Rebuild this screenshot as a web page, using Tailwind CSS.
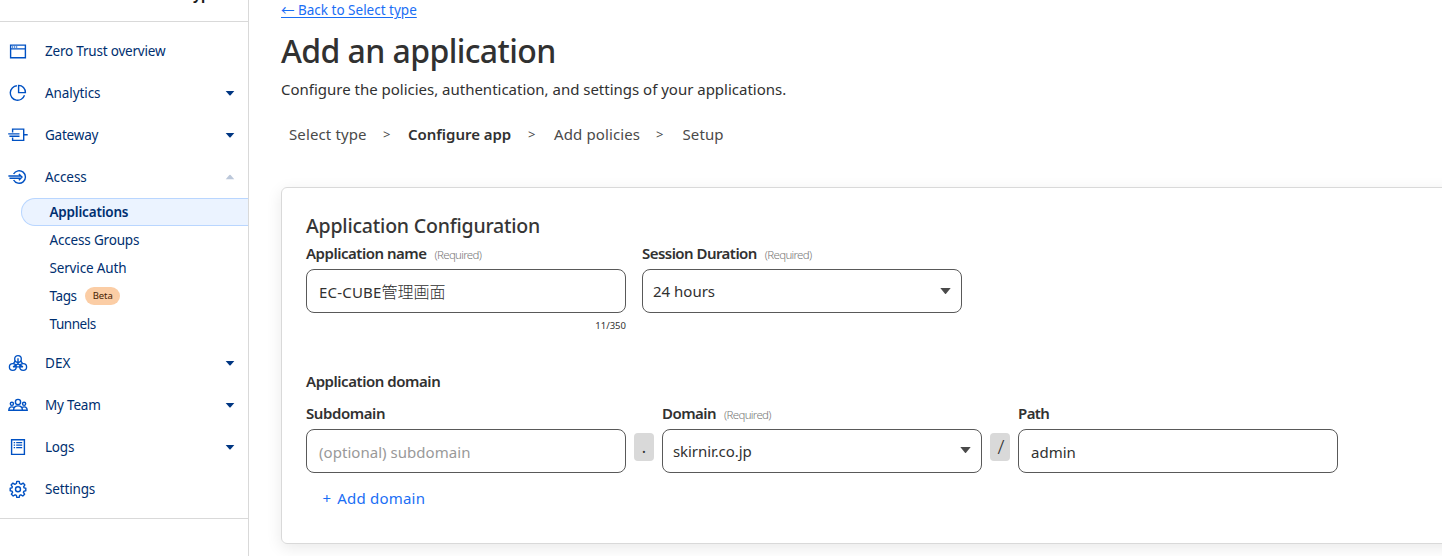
<!DOCTYPE html>
<html lang="en">
<head>
<meta charset="utf-8">
<title>Add an application</title>
<script src="https://cdn.jsdelivr.net/npm/@tailwindcss/browser@4"></script>
</head>
<body class="bg-white font-['Noto_Sans','Noto_Sans_CJK_JP',sans-serif] text-[#313131]">
<div class="flex h-[556px] w-[1442px] overflow-hidden">

  <aside class="flex w-[249px] shrink-0 flex-col border-r border-[#d9d9d9] text-[13.5px] tracking-[-0.08px] text-[#002f70]">
    <div class="h-[22px] overflow-hidden border-b border-[#d9d9d9] pl-[193px]">
      <div class="-mt-[15px] text-[14px] font-bold leading-5 text-[#1d1d1d]">yp</div>
    </div>
    <nav class="flex h-[497px] flex-col border-b border-[#d9d9d9] pt-2">
      <a class="flex h-[42px] items-center pl-2 pr-[13px]">
        <svg class="h-5 w-5" viewBox="0 0 20 20" fill="none" stroke="#0051c3" stroke-width="1.4"><path d="M2.6 4.1h14.8v12.6H2.6zM2.6 7.9h14.8"/><path d="M4.2 6h1M6.2 6h1M8.2 6h1"/></svg>
        <span class="ml-[17px] tracking-[-0.2px]">Zero Trust overview</span>
      </a>
      <a class="flex h-[42px] items-center pl-2 pr-[13px]">
        <svg class="h-5 w-5" viewBox="0 0 20 20" fill="none" stroke="#0051c3" stroke-width="1.4"><path d="M8.9 2.7a7.3 7.3 0 1 0 7.6 9.6"/><path d="M10.6 2.4v7.2h6.8c0-4-2.8-7.2-6.8-7.2z"/></svg>
        <span class="ml-[17px]">Analytics</span>
        <svg class="ml-auto h-3 w-[10px]" viewBox="0 0 10 12" fill="#003682"><path d="M.7 4h8.6L5.6 8.2q-.6.6-1.2 0z"/></svg>
      </a>
      <a class="flex h-[42px] items-center pl-2 pr-[13px]">
        <svg class="h-5 w-5" viewBox="0 0 20 20" fill="none" stroke="#0051c3" stroke-width="1.4"><path d="M4.6 7.5V4.1h11.1v11.3H4.6v-2.8M15.7 9.7h4M.2 8.9h11.3M1.4 11.2h10.1"/></svg>
        <span class="ml-[17px] tracking-[-0.22px]">Gateway</span>
        <svg class="ml-auto h-3 w-[10px]" viewBox="0 0 10 12" fill="#003682"><path d="M.7 4h8.6L5.6 8.2q-.6.6-1.2 0z"/></svg>
      </a>
      <a class="flex h-[42px] items-center pl-2 pr-[13px]">
        <svg class="h-5 w-5" viewBox="0 0 20 20" fill="none" stroke="#0051c3" stroke-width="1.4"><path d="M5.6 7A6.3 6.3 0 1 1 5.6 13M.4 9h12.8M1.5 11.2h11.2M10.9 6.9l3.1 3.2-3.1 3.2"/></svg>
        <span class="ml-[17px]">Access</span>
        <svg class="ml-auto h-3 w-[10px]" viewBox="0 0 10 12" fill="#bcc8da"><path d="M.7 8.2h8.6L5.6 4q-.6-.6-1.2 0z"/></svg>
      </a>
      <div class="mb-1 flex flex-col pl-[21px]">
        <a class="flex h-7 items-center rounded-l-full border border-r-0 border-[#b9d6ff] bg-[#ebf3ff] pl-[27.5px] font-semibold tracking-[-0.2px]">Applications</a>
        <a class="flex h-7 items-center pl-[28.5px] tracking-[-0.18px]">Access Groups</a>
        <a class="flex h-7 items-center pl-[28.5px] tracking-[-0.16px]">Service Auth</a>
        <a class="flex h-7 items-center pl-[28.5px]"><span class="tracking-[-0.4px]">Tags</span><span class="ml-[8.5px] flex h-[18px] w-[35px] items-center justify-center rounded-full bg-[#fbcda5] text-[9.5px] tracking-[-0.1px] text-[#482303]">Beta</span></a>
        <a class="flex h-7 items-center pl-[28.5px] tracking-[-0.45px]">Tunnels</a>
      </div>
      <a class="flex h-[42px] items-center pl-2 pr-[13px]">
        <svg class="h-5 w-5" viewBox="0 0 20 20" fill="none" stroke="#0051c3" stroke-width="1.35"><circle cx="10" cy="5.9" r="3.3"/><circle cx="4.8" cy="14" r="3.4"/><circle cx="15.2" cy="14" r="3.4"/><path d="M10 5.2v5.6M10 10.8l-5 3M10 10.8l5 3M5 13.9h10M7.4 7.6 5.4 10.6M12.6 7.6l2 3"/></svg>
        <span class="ml-[17px] tracking-[0.1px]">DEX</span>
        <svg class="ml-auto h-3 w-[10px]" viewBox="0 0 10 12" fill="#003682"><path d="M.7 4h8.6L5.6 8.2q-.6.6-1.2 0z"/></svg>
      </a>
      <a class="flex h-[42px] items-center pl-2 pr-[13px]">
        <svg class="h-5 w-5" viewBox="0 0 20 20" fill="none" stroke="#0051c3" stroke-width="1.4"><circle cx="10" cy="7" r="2.6"/><circle cx="3.9" cy="8.8" r="1.6"/><circle cx="16.1" cy="8.8" r="1.6"/><path d="M5.6 15.2c0-5.8 8.8-5.8 8.8 0zM5.6 15.2H.8c0-3 2.5-4.2 5.3-2.7M14.4 15.2h4.8c0-3-2.5-4.2-5.3-2.7"/></svg>
        <span class="ml-[17px] tracking-[-0.2px]">My Team</span>
        <svg class="ml-auto h-3 w-[10px]" viewBox="0 0 10 12" fill="#003682"><path d="M.7 4h8.6L5.6 8.2q-.6.6-1.2 0z"/></svg>
      </a>
      <a class="flex h-[42px] items-center pl-2 pr-[13px]">
        <svg class="h-5 w-5" viewBox="0 0 20 20" fill="none" stroke="#0051c3" stroke-width="1.4"><path d="M3.6 2.7h12.8v14.7H3.6z"/><path stroke-width="1.2" d="M5.7 5.6h1.4M8.2 5.6h6M5.7 8.1h1.4M8.2 8.1h6M5.7 10.6h1.4M8.2 10.6h6"/></svg>
        <span class="ml-[17px] tracking-[-0.2px]">Logs</span>
        <svg class="ml-auto h-3 w-[10px]" viewBox="0 0 10 12" fill="#003682"><path d="M.7 4h8.6L5.6 8.2q-.6.6-1.2 0z"/></svg>
      </a>
      <a class="flex h-[42px] items-center pl-2 pr-[13px]">
        <svg class="h-5 w-5" viewBox="0 0 20 20" fill="none" stroke="#0051c3" stroke-width="1.4" stroke-linejoin="round"><path d="M8.4 4.5 8.8 2.4h2.4l.4 2.1 1.5.8 2-1.2 1.8 1.8-1.3 1.9.5 1.1 1.7.4v2.4l-1.8.4-.6 1.3 1.2 1.8-1.8 1.8-1.9-1.2-1.3.6-.4 2H8.8l-.4-2-1.3-.6-1.9 1.2-1.8-1.8 1.2-1.8-.6-1.3-1.8-.4V9.3l1.7-.4.5-1.1-1.3-1.9 1.8-1.8 2 1.2z"/><circle cx="10" cy="10.3" r="2.5"/></svg>
        <span class="ml-[17px] tracking-[-0.15px]">Settings</span>
      </a>
    </nav>
  </aside>

  <main class="flex flex-1 flex-col pl-8">
    <a class="h-[20px] text-[13.5px] leading-[20px]"><span class="text-[#1a6ef5] underline underline-offset-2">← Back to Select type</span></a>
    <h1 class="mt-[9px] h-11 text-[32px] font-medium leading-[44px] tracking-[-0.6px]">Add an application</h1>
    <p class="mt-[4px] h-6 text-[15px] leading-6 tracking-[-0.01px]">Configure the policies, authentication, and settings of your applications.</p>
    <div class="mt-[21px] flex h-6 items-center pl-2 text-[15px] leading-6 text-[#4a4a4a]">
      <span class="w-[94px] tracking-[0.12px]">Select type</span>
      <span class="w-[25px] text-[13px]">&gt;</span>
      <span class="w-[120px] font-semibold tracking-[-0.03px] text-[#313131]">Configure app</span>
      <span class="w-[26px] text-[13px]">&gt;</span>
      <span class="w-[102px] tracking-[0.12px]">Add policies</span>
      <span class="w-[26.5px] text-[13px]">&gt;</span>
      <span class="tracking-[0.1px]">Setup</span>
    </div>

    <section class="mt-[41px] h-[357px] w-[1200px] shrink-0 rounded-md border border-[#d9d9d9] pl-6 shadow-[0_4px_16px_rgba(0,0,0,0.09)]">
      <h2 class="mt-[24px] h-7 text-[19.5px] font-medium leading-7 tracking-[-0.2px] text-[#363636]">Application Configuration</h2>
      <div class="flex gap-4">
        <div class="w-80">
          <label class="flex h-[29px] items-center pb-[2px] text-[15px] font-semibold tracking-[-0.48px]">Application name<span class="ml-2 pt-[3px] text-[11.5px] font-light tracking-[-0.7px] text-[#797979]">(Required)</span></label>
          <div class="flex h-11 items-center rounded-lg border border-[#595959] pl-3 pt-[2px] text-[15px] tracking-[0.2px]">EC-CUBE<span class="text-[16px] font-light tracking-[0px]">管理画面</span></div>
          <div class="mt-[5px] text-right text-[9.5px] leading-4">11/350</div>
        </div>
        <div class="w-80">
          <label class="flex h-[29px] items-center pb-[2px] text-[15px] font-semibold tracking-[-0.54px]">Session Duration<span class="ml-2 pt-[3px] text-[11.5px] font-light tracking-[-0.7px] text-[#797979]">(Required)</span></label>
          <div class="flex h-11 items-center justify-between rounded-lg border border-[#595959] pl-[10px] pr-[10px] text-[15px]">24 hours
            <svg class="h-3 w-[11px]" viewBox="0 0 11 12" fill="#4a4a4a"><path d="M.3 3h10.4L6 8.7q-.5.5-1 0z"/></svg>
          </div>
        </div>
      </div>
      <div class="mt-[35px] h-6 text-[15px] font-semibold leading-6 tracking-[-0.45px]">Application domain</div>
      <div class="mt-[7px] flex gap-2">
        <div class="w-80">
          <label class="flex h-[29px] items-center pb-[2px] text-[15px] font-semibold tracking-[-0.42px]">Subdomain</label>
          <div class="flex h-11 items-center rounded-lg border border-[#595959] pl-3 pt-[3px] text-[15px] tracking-[0.04px] text-[#999]">(optional) subdomain</div>
        </div>
        <div class="mt-[33px] flex h-7 w-5 items-center justify-center rounded bg-[#d9d9d9] text-[16px]">.</div>
        <div class="w-80">
          <label class="flex h-[29px] items-center pb-[2px] text-[15px] font-semibold tracking-[-0.52px]">Domain<span class="ml-2 pt-[3px] text-[11.5px] font-light tracking-[-0.7px] text-[#797979]">(Required)</span></label>
          <div class="flex h-11 items-center justify-between rounded-lg border border-[#595959] pl-[10px] pr-[10px] text-[15px] tracking-[-0.08px]">skirnir.co.jp
            <svg class="h-3 w-[11px]" viewBox="0 0 11 12" fill="#4a4a4a"><path d="M.3 2h10.4L6 7.7q-.5.5-1 0z"/></svg>
          </div>
        </div>
        <div class="mt-[33px] flex h-7 w-5 items-center justify-center rounded bg-[#d9d9d9] pl-[2px] text-[20px] font-light">/</div>
        <div class="w-80">
          <label class="flex h-[29px] items-center pb-[2px] text-[15px] font-semibold tracking-[-0.6px]">Path</label>
          <div class="flex h-11 items-center rounded-lg border border-[#595959] pl-3 pt-[3px] text-[15px]">admin</div>
        </div>
      </div>
      <a class="mt-[13px] block pl-[16.5px] text-[15px] leading-6 tracking-[0.2px] text-[#1a6ef5]">+<span class="ml-[6px]">Add domain</span></a>
    </section>
  </main>
</div>
</body>
</html>
